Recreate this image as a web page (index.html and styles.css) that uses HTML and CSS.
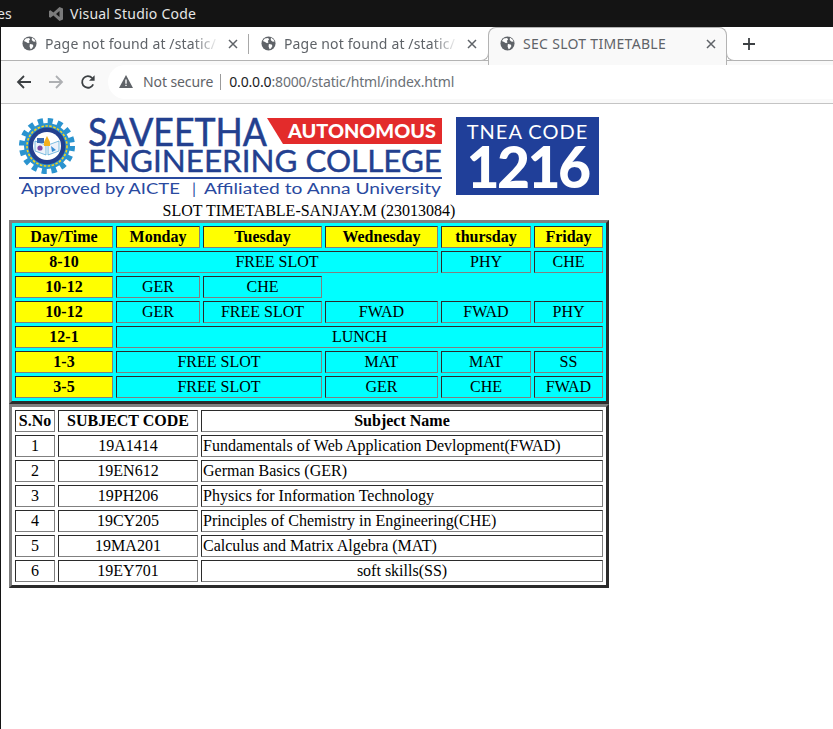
FILE: index.html
```html
<!DOCTYPE html>
<html lang="en">
<head>
  <meta charset="UTF-8" />
  <meta name="viewport" content="width=device-width, initial-scale=1.0"/>
  <title>SEC SLOT TIMETABLE</title>
  <link rel="stylesheet" href="styles.css">
</head>
<body>
  <svg class="defs" width="0" height="0">
    <defs>
      <symbol id="globe" viewBox="0 0 16 16">
        <circle cx="8" cy="8" r="7.5" fill="#5f6368"/>
        <path d="M4 2.6 7.6 2l1 1.7-1.4 1.5.9 1.4-1.6 1-2.2-1.2L2 5.2zM8.4 8.4l3 .6.8 1.6-1.6 2.6-1.4 1-1.1-3zM10.6 1.6l3 2.4.8 2.2-2.4-.4-1.6-1.6z" fill="#fff"/>
      </symbol>
      <symbol id="close" viewBox="0 0 10 10">
        <path d="M1 1 9 9M9 1 1 9" stroke="#5f6368" stroke-width="1.5" fill="none"/>
      </symbol>
    </defs>
  </svg>

  <div class="topbar">
    <span class="topbar-cut">es</span>
    <svg class="vscode" width="16" height="16" viewBox="0 0 16 16">
      <path d="M11.5 1 15 2.6v10.8L11.5 15 5.4 9.4 2.4 11.7 1 11V5l1.4-.7 3 2.3zM11.5 5 8 8l3.5 3z" fill="#7b7b7b"/>
    </svg>
    <span class="topbar-title">Visual Studio Code</span>
  </div>

  <div class="browser">
    <div class="tabstrip">
      <div class="tab">
        <svg class="favicon"><use href="#globe"/></svg>
        <span class="tab-title">Page not found at /static/</span>
        <svg class="tab-close"><use href="#close"/></svg>
      </div>
      <div class="tab tab-sep">
        <svg class="favicon"><use href="#globe"/></svg>
        <span class="tab-title">Page not found at /static/</span>
        <svg class="tab-close"><use href="#close"/></svg>
      </div>
      <div class="tab tab-active">
        <svg class="favicon"><use href="#globe"/></svg>
        <span class="tab-title">SEC SLOT TIMETABLE</span>
        <svg class="tab-close"><use href="#close"/></svg>
      </div>
      <svg class="new-tab" width="12" height="12" viewBox="0 0 12 12">
        <path d="M6 0v12M0 6h12" stroke="#3c4043" stroke-width="1.8" fill="none"/>
      </svg>
    </div>

    <div class="toolbar">
      <svg class="nav-icon" width="16" height="16" viewBox="0 0 16 16">
        <path d="M15 8H2M8 2 2 8l6 6" stroke="#3c4043" stroke-width="1.8" fill="none"/>
      </svg>
      <svg class="nav-icon" width="16" height="16" viewBox="0 0 16 16">
        <path d="M1 8h13M8 2l6 6-6 6" stroke="#aeb0b3" stroke-width="1.8" fill="none"/>
      </svg>
      <svg class="nav-icon" width="16" height="16" viewBox="0 0 16 16">
        <path d="M13.2 10.4A5.8 5.8 0 1 1 12.2 4" stroke="#3c4043" stroke-width="1.8" fill="none"/>
        <path d="M14.6 1.2v5.6H9z" fill="#3c4043"/>
      </svg>
      <div class="omnibox">
        <svg class="warn" width="14" height="13" viewBox="0 0 14 13">
          <path d="M7 0 14 13H0z" fill="#5f6368"/>
          <path d="M6.3 4.5h1.4v4.2H6.3zM6.3 9.7h1.4v1.4H6.3z" fill="#fff"/>
        </svg>
        <span class="not-secure">Not secure</span>
        <span class="omni-sep"></span>
        <span class="url"><b>0.0.0.0</b>:8000/static/html/index.html</span>
      </div>
    </div>

    <div class="page">
      <div class="banner">
        <svg class="logo" width="424" height="84" viewBox="0 0 424 84">
          <circle cx="29" cy="31" r="24.5" fill="none" stroke="#2a93cf" stroke-width="7" stroke-dasharray="5 4.62"/>
          <circle cx="29" cy="31" r="23" fill="#2a93cf"/>
          <circle cx="29" cy="31" r="20" fill="none" stroke="#f4d21f" stroke-width="1.6" stroke-dasharray="2.5 1.5"/>
          <circle cx="29" cy="31" r="18.5" fill="#23408f"/>
          <circle cx="29" cy="31" r="14" fill="#fff"/>
          <path d="M17 26 28 30v10l-11-4zM41 26 30 30v10l11-4z" fill="#eef2f9" stroke="#2a93cf" stroke-width=".6"/>
          <rect x="19" y="23" width="7" height="5" fill="#3a6db5"/>
          <path d="M29 21l3 6v4h-6v-4z" fill="#f2b01e"/>
          <circle cx="22" cy="33" r="2.6" fill="#7b4aa8"/>
          <path d="M33 31l5 4-4 2z" fill="#3a8fd6"/>
          <text class="logo-name" x="70" y="31" textLength="179" lengthAdjust="spacingAndGlyphs">SAVEETHA</text>
          <path d="M249 3H424V29H265z" fill="#e32b2b"/>
          <text class="logo-auto" x="270" y="23" textLength="148" lengthAdjust="spacingAndGlyphs">AUTONOMOUS</text>
          <text class="logo-college" x="70" y="57" textLength="354" lengthAdjust="spacingAndGlyphs">ENGINEERING COLLEGE</text>
          <rect x="1" y="62" width="423" height="2" fill="#2a4a9f"/>
          <text class="logo-sub" x="3" y="79" textLength="159" lengthAdjust="spacingAndGlyphs">Approved by AICTE</text>
          <text class="logo-sub" x="174" y="79">|</text>
          <text class="logo-sub" x="186" y="79" textLength="237" lengthAdjust="spacingAndGlyphs">Affiliated to Anna University</text>
        </svg>
        <div class="tnea">
          <span class="tnea-label">TNEA CODE</span>
          <span class="tnea-code">1216</span>
        </div>
      </div>
      <div class="heading">SLOT TIMETABLE-SANJAY.M (23013084)</div>

      <table class="grid slots">
        <colgroup>
          <col class="c-day"><col class="c-mon"><col class="c-tue"><col class="c-wed"><col class="c-thu"><col class="c-fri">
        </colgroup>
        <tr>
          <th>Day/Time</th><th>Monday</th><th>Tuesday</th><th>Wednesday</th><th>thursday</th><th>Friday</th>
        </tr>
        <tr>
          <th>8-10</th><td colspan="3">FREE SLOT</td><td>PHY</td><td>CHE</td>
        </tr>
        <tr>
          <th>10-12</th><td>GER</td><td>CHE</td>
        </tr>
        <tr>
          <th>10-12</th><td>GER</td><td>FREE SLOT</td><td>FWAD</td><td>FWAD</td><td>PHY</td>
        </tr>
        <tr>
          <th>12-1</th><td colspan="5">LUNCH</td>
        </tr>
        <tr>
          <th>1-3</th><td colspan="2">FREE SLOT</td><td>MAT</td><td>MAT</td><td>SS</td>
        </tr>
        <tr>
          <th>3-5</th><td colspan="2">FREE SLOT</td><td>GER</td><td>CHE</td><td>FWAD</td>
        </tr>
      </table>

      <table class="grid subjects">
        <colgroup>
          <col class="c-no"><col class="c-code"><col class="c-name">
        </colgroup>
        <tr>
          <th>S.No</th><th>SUBJECT CODE</th><th>Subject Name</th>
        </tr>
        <tr>
          <td>1</td><td>19A1414</td><td class="left">Fundamentals of Web Application Devlopment(FWAD)</td>
        </tr>
        <tr>
          <td>2</td><td>19EN612</td><td class="left">German Basics (GER)</td>
        </tr>
        <tr>
          <td>3</td><td>19PH206</td><td class="left">Physics for Information Technology</td>
        </tr>
        <tr>
          <td>4</td><td>19CY205</td><td class="left">Principles of Chemistry in Engineering(CHE)</td>
        </tr>
        <tr>
          <td>5</td><td>19MA201</td><td class="left">Calculus and Matrix Algebra (MAT)</td>
        </tr>
        <tr>
          <td>6</td><td>19EY701</td><td>soft skills(SS)</td>
        </tr>
      </table>
    </div>
  </div>
</body>
</html>
```

FILE: styles.css
```css
* {
  box-sizing: border-box;
}

html, body {
  height: 100%;
}

body {
  margin: 0;
  overflow: hidden;
  background-color: #141414;
  font-family: "Noto Sans", sans-serif;
}

.defs {
  display: block;
  height: 0;
}

/* desktop bar */
.topbar {
  height: 27px;
  display: flex;
  align-items: center;
  color: #e6e6e6;
  font-size: 14px;
  overflow: hidden;
}

.topbar-cut {
  width: 51px;
  margin-left: -3px;
  flex: none;
}

.vscode {
  flex: none;
}

.topbar-title {
  margin-left: 6px;
  letter-spacing: 0.23px;
}

/* browser */
.browser {
  height: 702px;
  margin-left: 1px;
  background-color: #fff;
}

.tabstrip {
  height: 34px;
  padding-left: 9px;
  display: flex;
  align-items: flex-start;
  background-color: #fff;
  border-bottom: 1px solid #b3b3b3;
}

.tab {
  position: relative;
  width: 239px;
  height: 33px;
  padding-left: 12px;
  display: flex;
  align-items: center;
  flex: none;
  color: #5f6368;
  font-size: 14px;
}

.tab-sep::before {
  content: "";
  position: absolute;
  left: -1px;
  top: 7px;
  width: 1px;
  height: 20px;
  background-color: #a8a8a8;
}

.tab-active {
  z-index: 1;
  height: 38px;
  padding: 0 0 6px 11px;
  background-color: #f9f9f9;
  border: 1px solid #b3b3b3;
  border-bottom: none;
  border-radius: 8px 8px 0 0;
}

.tab-active::before,
.tab-active::after {
  content: "";
  position: absolute;
  bottom: 4px;
  width: 8px;
  height: 8px;
  border-bottom: 1px solid #b3b3b3;
}

.tab-active::before {
  left: -9px;
  border-right: 1px solid #b3b3b3;
  border-bottom-right-radius: 8px;
  background-color: #fff;
}

.tab-active::after {
  right: -9px;
  border-left: 1px solid #b3b3b3;
  border-bottom-left-radius: 8px;
  background-color: #fff;
}

.favicon {
  width: 15px;
  height: 15px;
  flex: none;
}

.tab-title {
  width: 174px;
  margin-left: 8px;
  white-space: nowrap;
  overflow: hidden;
  letter-spacing: 0.15px;
  -webkit-mask-image: linear-gradient(to right, #000 85%, transparent 100%);
  mask-image: linear-gradient(to right, #000 85%, transparent 100%);
}

.tab-active .tab-title {
  letter-spacing: 0.3px;
  -webkit-mask-image: none;
  mask-image: none;
}

.tab-close {
  width: 10px;
  height: 10px;
  margin-left: 9px;
  flex: none;
}

.new-tab {
  margin: 11px 0 0 16px;
  flex: none;
}

.toolbar {
  height: 43px;
  padding: 4px 0 4px 15px;
  display: flex;
  align-items: center;
  background-color: #f9f9f9;
  border-bottom: 1px solid #c4c4c4;
}

.nav-icon {
  margin: -1px 16px 0 0;
  flex: none;
}

.nav-icon:nth-child(3) {
  margin-right: 12px;
}

.omnibox {
  flex: 1;
  height: 34px;
  padding: 0 0 1px 11px;
  display: flex;
  align-items: center;
  background-color: #fff;
  border-radius: 17px 0 0 17px;
  font-size: 14px;
  color: #5f6368;
}

.not-secure {
  margin-left: 10px;
  letter-spacing: -0.1px;
}

.omni-sep {
  width: 1px;
  height: 16px;
  margin: 0 8px 0 7px;
  background-color: #9a9a9a;
}

.url {
  color: #6b7076;
  letter-spacing: -0.15px;
}

.url b {
  font-weight: 400;
  color: #202124;
}

/* page content */
.page {
  padding: 8px 0 0 8px;
  width: 616px;
  color: #000;
  font-family: "Liberation Serif", serif;
  font-size: 16px;
}

.banner {
  height: 90px;
  width: 600px;
  padding: 3px 10px 0 9px;
  display: flex;
  align-items: flex-start;
}

.logo {
  flex: none;
}

.logo text {
  font-family: Lato, sans-serif;
  fill: #23408f;
}

.logo .logo-name {
  font-size: 39px;
  stroke: #23408f;
  stroke-width: 0.5px;
}

.logo .logo-auto {
  font-size: 18px;
  font-weight: 900;
  fill: #fff;
}

.logo .logo-college {
  font-size: 31px;
  stroke: #23408f;
  stroke-width: 0.4px;
}

.logo .logo-sub {
  font-size: 16px;
  fill: #2a4a9f;
}

.tnea {
  width: 143px;
  height: 78px;
  margin: 2px 0 0 14px;
  display: flex;
  flex-direction: column;
  align-items: center;
  flex: none;
  background-color: #203f99;
  color: #fff;
  font-family: Lato, sans-serif;
}

.tnea-label {
  margin-top: 3px;
  font-size: 20px;
  line-height: 22px;
  letter-spacing: 1px;
}

.tnea-code {
  font-size: 57px;
  line-height: 49px;
  font-weight: 900;
  letter-spacing: -2.5px;
}

.heading {
  width: 600px;
  height: 18px;
  line-height: 18px;
  text-align: center;
}

.grid {
  width: 600px;
  table-layout: fixed;
  border-collapse: separate;
  border-spacing: 3px;
  border: 3px solid;
  border-color: #808080 #2b2b2b #2b2b2b #808080;
  font-size: 16px;
}

.grid th,
.grid td {
  height: 22px;
  padding: 1px;
  line-height: 18px;
  text-align: center;
  border: 1px solid;
  border-color: #2b2b2b #808080 #808080 #2b2b2b;
  white-space: nowrap;
}

.grid .left {
  text-align: left;
}

.slots {
  background-color: #0ff;
}

.slots th {
  background-color: #ff0;
}

.c-day { width: 98px; }
.c-mon { width: 84px; }
.c-tue { width: 119px; }
.c-wed { width: 113px; }
.c-thu { width: 90px; }
.c-fri { width: 69px; }

.c-no { width: 40px; }
.c-code { width: 140px; }
.c-name { width: 402px; }
```
